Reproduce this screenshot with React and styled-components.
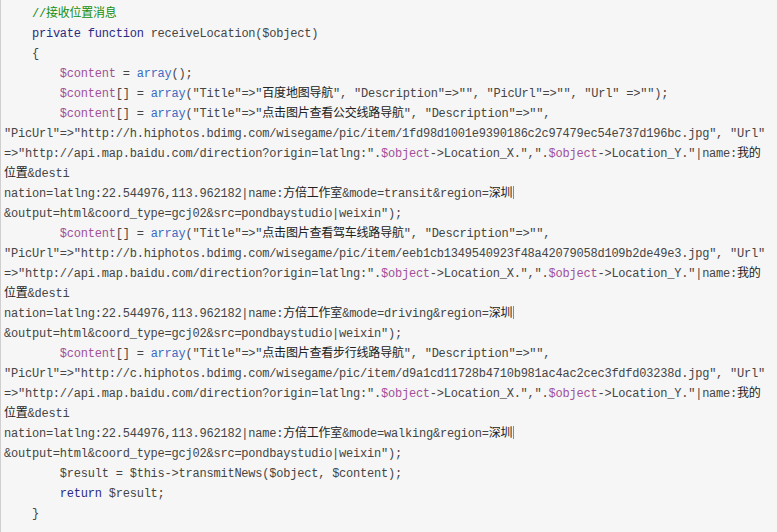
import React from "react";
import styled, { createGlobalStyle } from "styled-components";

const Global = createGlobalStyle`
  html, body { margin: 0; padding: 0; background: #ffffff; }
  #root { width: 777px; height: 532px; overflow: hidden; }
`;

const CodeBlock = styled.pre`
  margin: 0;
  box-sizing: border-box;
  width: 777px;
  height: 532px;
  padding: 4px 0 0 3px;
  background: #f6f6f6;
  border-left: 1px solid #cfcfcf;
  font-family: "Liberation Mono", "Noto Sans CJK SC", monospace;
  font-size: 12px;
  letter-spacing: -0.22px;
  line-height: 20px;
  color: #454545;
  white-space: pre;
  overflow: hidden;
`;

const Line = styled.div`
  height: 20px;
`;

const Comment = styled.span`color: #128f12;`;
const Keyword = styled.span`color: #2a2a85;`;
const Func = styled.span`color: #3b6cc0;`;
const Var = styled.span`color: #a0509b;`;
const Cjk = styled.span`color: #222222;`;
const Caret = styled.span`
  display: inline-block;
  width: 1px;
  height: 13px;
  margin-left: 1px;
  vertical-align: -2px;
  background: #8a8a8a;
`;

const I4 = "    ";
const I8 = "        ";

function Entry({ title, host, hash, mode }) {
  return (
    <>
      <Line>
        {I8}<Var>$content</Var>[] = <Func>array</Func>("Title"=&gt;"<Cjk>{title}</Cjk>", "Description"=&gt;"",
      </Line>
      <Line>
        "PicUrl"=&gt;"http://{host}.hiphotos.bdimg.com/wisegame/pic/item/{hash}.jpg", "Url"
      </Line>
      <Line>
        =&gt;"http://api.map.baidu.com/direction?origin=latlng:".<Var>$object</Var>-&gt;Location_X.",".<Var>$object</Var>-&gt;Location_Y."|name:<Cjk>我的</Cjk>
      </Line>
      <Line><Cjk>位置</Cjk>&amp;desti</Line>
      <Line>
        nation=latlng:22.544976,113.962182|name:<Cjk>方倍工作室</Cjk>&amp;mode={mode}&amp;region=<Cjk>深圳</Cjk><Caret />
      </Line>
      <Line>&amp;output=html&amp;coord_type=gcj02&amp;src=pondbaystudio|weixin");</Line>
    </>
  );
}

const entries = [
  { title: "点击图片查看公交线路导航", host: "h", hash: "1fd98d1001e9390186c2c97479ec54e737d196bc", mode: "transit" },
  { title: "点击图片查看驾车线路导航", host: "b", hash: "eeb1cb1349540923f48a42079058d109b2de49e3", mode: "driving" },
  { title: "点击图片查看步行线路导航", host: "c", hash: "d9a1cd11728b4710b981ac4ac2cec3fdfd03238d", mode: "walking" },
];

export default function App() {
  return (
    <>
      <Global />
      <CodeBlock>
        <Line>{I4}<Comment>//接收位置消息</Comment></Line>
        <Line>{I4}<Keyword>private</Keyword> <Keyword>function</Keyword> receiveLocation($object)</Line>
        <Line>{I4}{"{"}</Line>
        <Line>{I8}<Var>$content</Var> = <Func>array</Func>();</Line>
        <Line>
          {I8}<Var>$content</Var>[] = <Func>array</Func>("Title"=&gt;"<Cjk>百度地图导航</Cjk>", "Description"=&gt;"", "PicUrl"=&gt;"", "Url" =&gt;"");
        </Line>
        {entries.map((e) => (
          <Entry key={e.mode} {...e} />
        ))}
        <Line>{I8}$result = $this-&gt;transmitNews($object, $content);</Line>
        <Line>{I8}<Keyword>return</Keyword> $result;</Line>
        <Line>{I4}{"}"}</Line>
      </CodeBlock>
    </>
  );
}
